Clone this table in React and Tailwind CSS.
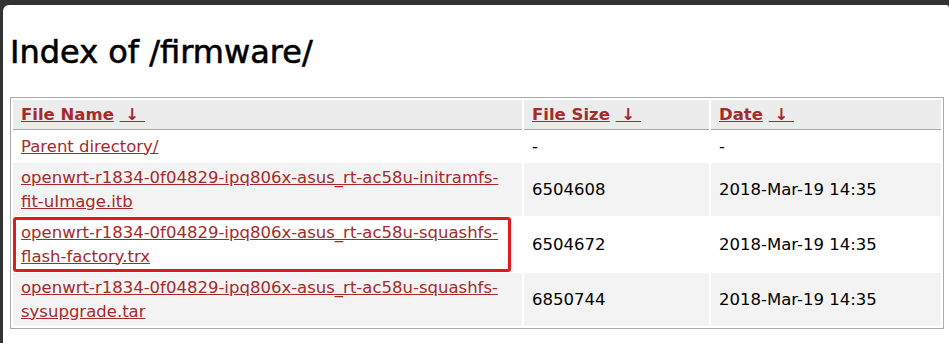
const rows = [
  { name: ["Parent directory/"], size: "-", date: "-" },
  {
    name: ["openwrt-r1834-0f04829-ipq806x-asus_rt-ac58u-initramfs-", "fit-uImage.itb"],
    size: "6504608",
    date: "2018-Mar-19 14:35",
  },
  {
    name: ["openwrt-r1834-0f04829-ipq806x-asus_rt-ac58u-squashfs-", "flash-factory.trx"],
    size: "6504672",
    date: "2018-Mar-19 14:35",
    marked: true,
  },
  {
    name: ["openwrt-r1834-0f04829-ipq806x-asus_rt-ac58u-squashfs-", "sysupgrade.tar"],
    size: "6850744",
    date: "2018-Mar-19 14:35",
  },
];

function SortHead({ label }) {
  return (
    <th className="bg-[#ececec] border-b border-[#aaa] px-2 py-[2.5px] text-left font-bold">
      <a href="#" className="text-[#a52a2a] underline">{label}</a>{" "}
      <a href="#" className="text-[#a52a2a] underline whitespace-pre">{" ↓ "}</a>
    </th>
  );
}

export default function App() {
  return (
    <div className="bg-[#333] pt-[5px] pl-[3px] h-[343px] overflow-hidden">
      <div
        className="bg-white rounded-tl-[6px] rounded-tr-[3px] h-full pl-[7px] pr-[5px] text-black"
        style={{ fontFamily: '"DejaVu Sans", Verdana, sans-serif' }}
      >
        <h1 className="text-[32px] leading-none pt-[31px] pb-[29px] [-webkit-text-stroke:0.6px_black]">
          Index of /firmware/
        </h1>
        <table className="w-[934px] border border-[#aaa] border-separate border-spacing-[2px] text-[16.5px] leading-[24px]">
          <thead>
            <tr>
              <SortHead label="File Name" />
              <SortHead label="File Size" />
              <SortHead label="Date" />
            </tr>
          </thead>
          <tbody>
            {rows.map((r, i) => (
              <tr key={i} className={i % 2 === 1 ? "bg-[#f3f3f3]" : "bg-white"}>
                <td className="relative w-[509px] px-2 py-[2.5px]">
                  <a href="#" className="text-[#a52a2a] underline">
                    {r.name.map((line, j) => (
                      <span key={j} className="block">{line}</span>
                    ))}
                  </a>
                  {r.marked && (
                    <span className="absolute left-0 top-[-1px] w-[498px] bottom-[-1px] border-[3px] border-[#e01b1b] rounded-[3px] pointer-events-none" />
                  )}
                </td>
                <td className="w-[185px] px-2 py-[2.5px]">{r.size}</td>
                <td className="px-2 py-[2.5px]">{r.date}</td>
              </tr>
            ))}
          </tbody>
        </table>
      </div>
    </div>
  );
}
